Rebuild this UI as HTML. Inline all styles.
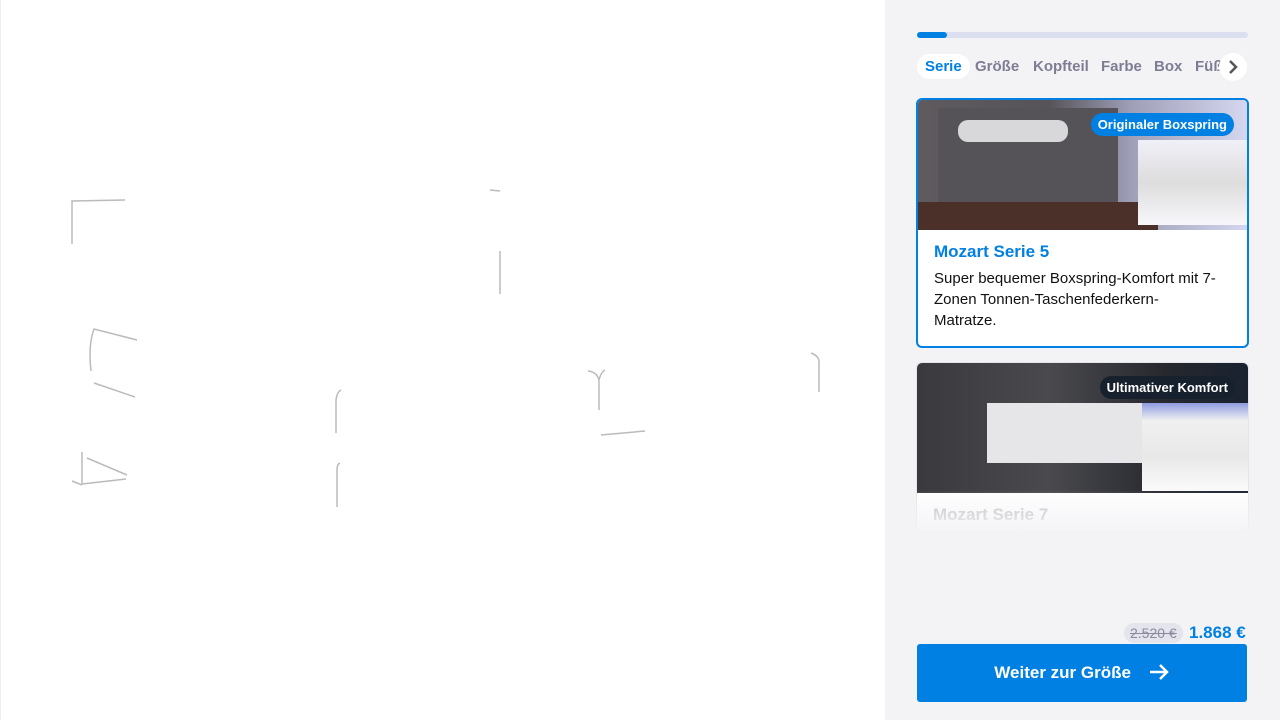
<!DOCTYPE html>
<html><head><meta charset="utf-8"><style>
*{box-sizing:border-box;margin:0;padding:0}
body{width:1280px;height:720px;overflow:hidden;background:#fff;font-family:"Liberation Sans",sans-serif;position:relative}
.left{position:absolute;left:0;top:0;width:885px;height:720px;background:#fff;border-left:1px solid #eee}
.side{position:absolute;left:885px;top:0;width:395px;height:720px;background:#f3f3f6}
.prog{position:absolute;left:32px;top:32px;width:331px;height:6px;border-radius:3px;background:#dcdff0}
.prog i{position:absolute;left:0;top:0;width:30px;height:6px;border-radius:3px;background:#0080e3}
.tabs{position:absolute;left:32px;top:54px;height:26px;width:331px;overflow:hidden;font-weight:bold;font-size:15px;color:#7e7d93}
.tabs span{position:absolute;top:4px}
.tab1{left:0!important;top:0!important;background:#fff;border-radius:13px;padding:4px 8px;color:#0080e3}
.arrow{position:absolute;left:334px;top:53px;width:28px;height:28px;border-radius:50%;background:#fff}
.card{position:absolute;left:31px;width:333px;background:#fff;border-radius:6px;overflow:hidden}
.img{height:131px;position:relative}
.badge{position:absolute;right:13px;top:13px;color:#fff;font-weight:bold;font-size:13px;padding:4px 7px;border-radius:12px}
h3{font-size:17px;color:#0080e3;margin:12px 0 0 16px}
p{font-size:15px;color:#111;margin:6px 16px 0 16px;line-height:21px;white-space:nowrap}
</style></head><body>
<div class="left">
<svg width="885" height="720" stroke="#bbb" fill="none" stroke-width="1.5">
<path d="M71 244V201L124 200"/><path d="M489 190L499 191"/><path d="M499 251V294"/>
<path d="M136 340L93 329Q87 345 90 371"/><path d="M93 383L134 397"/>
<path d="M335 433V400Q336 392 340 390"/><path d="M336 507V470Q336 464 339 463"/>
<path d="M587 371Q596 372 598 380V410M598 380Q600 372 604 370"/><path d="M600 435L644 431"/>
<path d="M810 353Q818 356 818 362V392"/>
<path d="M81 452V484L125 479M71 481L81 485M86 458L126 475"/>
</svg></div>
<div class="side">
<div class="prog"><i></i></div>
<div class="tabs"><span class="tab1">Serie</span><span style="left:58px">Größe</span><span style="left:116px">Kopfteil</span><span style="left:184px">Farbe</span><span style="left:237px">Box</span><span style="left:278px">Füße</span></div>
<div class="arrow"><svg width="28" height="28" viewBox="0 0 28 28" fill="none" stroke="#555" stroke-width="2.5"><path d="M11 8L17 14L11 20"/></svg></div>
<div class="card" style="top:98px;height:250px;border:2px solid #0080e3">
<div class="img" style="height:130px;background:linear-gradient(90deg,#5e5a5e 0%,#575459 40%,#9fa0b8 65%,#d5d6ef 100%)">
<div style="position:absolute;left:20px;top:8px;width:180px;height:100px;background:#555358"></div>
<div style="position:absolute;left:40px;top:20px;width:110px;height:22px;background:#d8d8da;border-radius:10px"></div>
<div style="position:absolute;left:0;top:102px;width:240px;height:28px;background:#4a3029"></div>
<div style="position:absolute;left:220px;top:40px;width:111px;height:85px;background:linear-gradient(#f0f0f8,#ddd 50%,#f7f7fb)"></div>
<div class="badge" style="background:#0080e3">Originaler Boxspring</div></div>
<h3>Mozart Serie 5</h3>
<p>Super bequemer Boxspring-Komfort mit 7-<br>Zonen Tonnen-Taschenfederkern-<br>Matratze.</p>
</div>
<div class="card" style="top:362px;height:170px;border:1px solid #e4e4ea">
<div class="img" style="height:130px;background:linear-gradient(90deg,#3a3a3e 0%,#4a4a4e 40%,#26282e 75%,#1a2230 100%)">
<div style="position:absolute;left:70px;top:40px;width:170px;height:60px;background:#e6e6e8"></div>
<div style="position:absolute;left:225px;top:40px;width:107px;height:88px;background:linear-gradient(#8f9ce0,#f0f0f0 20%,#e8e8e8 60%,#fafafa)"></div>
<div class="badge" style="background:#17202d">Ultimativer Komfort</div></div>
<h3 style="color:#bcbcc2">Mozart Serie 7</h3>
</div>
<div style="position:absolute;left:31px;top:490px;width:335px;height:45px;background:linear-gradient(rgba(243,243,246,0),#f3f3f6)"></div>
<div style="position:absolute;left:239px;top:623px;background:#e4e4ec;border-radius:10px;padding:2px 6px;font-size:14px;color:#8a8aa0;text-decoration:line-through">2.520 €</div>
<div style="position:absolute;left:304px;top:623px;font-size:17px;font-weight:bold;color:#0080e3">1.868 €</div>
<div style="position:absolute;left:32px;top:644px;width:330px;height:58px;background:#0080e3;border-radius:3px;color:#fff;font-weight:bold;font-size:17px;text-align:center;line-height:58px">Weiter zur Größe
<svg width="22" height="22" viewBox="0 0 22 22" style="vertical-align:-5px;margin-left:12px" stroke="#fff" stroke-width="2.5" fill="none"><path d="M2 11H19M12 4L19 11L12 18"/></svg></div>
</div>
</body></html>
